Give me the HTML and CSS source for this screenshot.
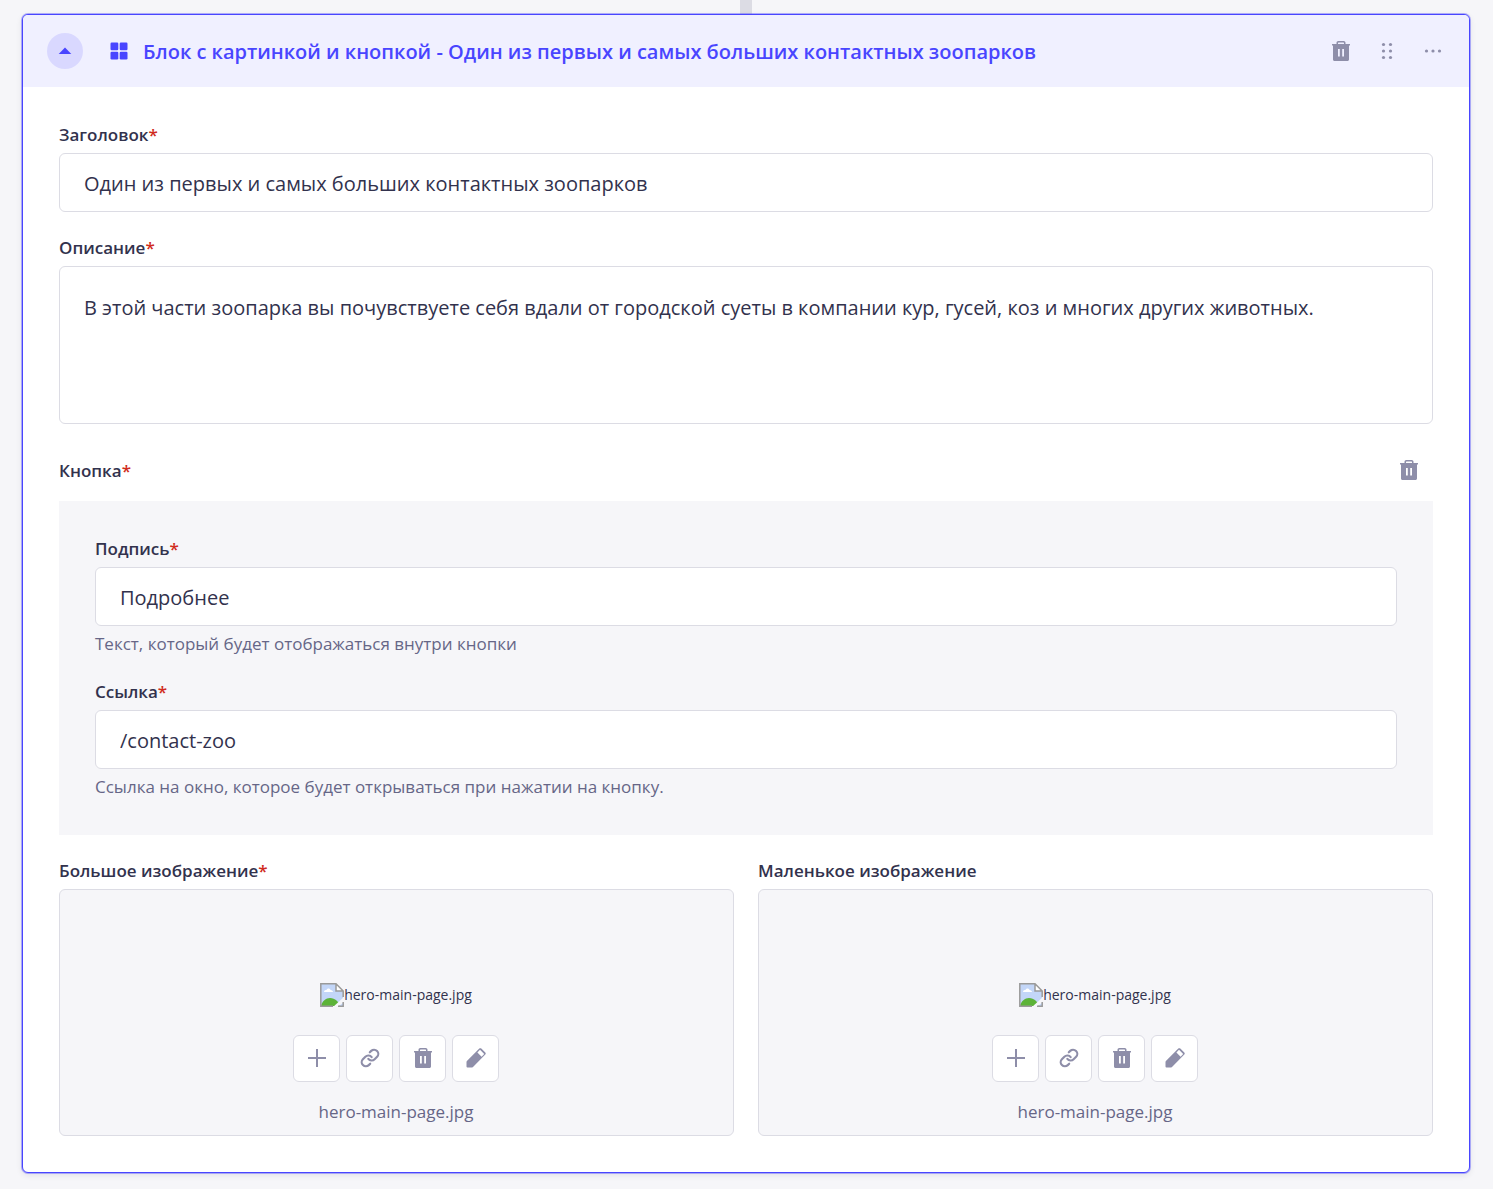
FILE: index.html
```html
<!DOCTYPE html>
<html lang="ru">
<head>
<meta charset="utf-8">
<meta name="viewport" content="width=device-width, initial-scale=1">
<title>Блок с картинкой и кнопкой</title>
<link rel="stylesheet" href="styles.css">
</head>
<body>
<svg class="sprite" aria-hidden="true">
  <symbol id="trash" viewBox="0 0 18 20">
    <path fill="currentColor" fill-rule="evenodd" d="M4.5 3V1.8C4.5.8 5.3 0 6.300 0h5.400c1 0 1.800.8 1.800 1.800V3H18v1.500h-1V18.500c0 .8-.7 1.500-1.500 1.500h-13C1.700 20 1 19.300 1 18.500V4.500H0V3zM6 3h6V1.900c0-.3-.2-.5-.5-.5h-5c-.3 0-.5.2-.5.500zM6 8v7.500h1.800V8zM10.200 8v7.500H12V8z"/>
  </symbol>
  <symbol id="plus" viewBox="0 0 20 20">
    <path fill="none" stroke="currentColor" stroke-width="2" d="M10 1v18M1 10h18"/>
  </symbol>
  <symbol id="link" viewBox="0 0 24 24">
    <path fill="none" stroke="currentColor" stroke-width="2.600" stroke-linecap="round" stroke-linejoin="round" d="M10 13a5 5 0 0 0 7.540.54l3-3a5 5 0 0 0-7.070-7.070l-1.720 1.710M14 11a5 5 0 0 0-7.540-.54l-3 3a5 5 0 0 0 7.070 7.070l1.710-1.710"/>
  </symbol>
  <symbol id="pencil" viewBox="0 0 20 20">
    <path fill="currentColor" fill-rule="evenodd" d="M13.300.6c.6-.6 1.400-.6 2 0l4 4c.6.6.6 1.400 0 2L7 19l-.8.400H1.400c-.5 0-.9-.4-.9-.9v-4.700l.4-.8zM11.400 4.500l4.200 4.200L18.200 6 14 1.800z"/>
  </symbol>
  <symbol id="broken" viewBox="0 0 24 24">
    <path fill="#c3d6f8" d="M1 1h15l7 7v15H1z"/>
    <path fill="#fff" d="M4 9c0-2 2-2 2.500-2C7 5 10 5 10.500 7c1.500 0 2.500 1 2.500 2zM16 1l7 7h-7z"/>
    <path fill="#5cb338" d="M1 23c1-5 5-8 9-8 5 0 9 4 10 8z"/>
    <path fill="#f6f6f9" d="M13 24 24 14v5l-6 5z"/>
    <path fill="none" stroke="#9a9a9a" stroke-width="1.500" d="M13 23.200H.8V.8H16l7.200 7.200v6M16 .8V8h7.200M23.200 19v4.200H18"/>
  </symbol>
</svg>

<div class="connector"></div>
<main class="block">
  <header class="block-header">
    <button class="toggle" type="button" aria-label="Свернуть">
      <svg width="14" height="8" viewBox="0 0 14 8"><path fill="currentColor" d="M7 .5 13.300 7H.7z"/></svg>
    </button>
    <svg class="block-icon" width="18" height="18" viewBox="0 0 18 18" fill="currentColor"><rect x=".5" y=".5" width="7.800" height="7.800" rx="1.200"/><rect x="9.700" y=".5" width="7.800" height="7.800" rx="1.200"/><rect x=".5" y="9.700" width="7.800" height="7.800" rx="1.200"/><rect x="9.700" y="9.700" width="7.800" height="7.800" rx="1.200"/></svg>
    <h2 class="block-title">Блок с картинкой и кнопкой - Один из первых и самых больших контактных зоопарков</h2>
    <div class="block-actions">
      <button class="icon-button" type="button" aria-label="Удалить"><svg width="18" height="20"><use href="#trash"/></svg></button>
      <button class="icon-button" type="button" aria-label="Переместить"><svg width="12" height="18" viewBox="0 0 12 18" fill="currentColor"><circle cx="2.500" cy="2.500" r="1.600"/><circle cx="9.500" cy="2.500" r="1.600"/><circle cx="2.500" cy="9" r="1.600"/><circle cx="9.500" cy="9" r="1.600"/><circle cx="2.500" cy="15.500" r="1.600"/><circle cx="9.500" cy="15.500" r="1.600"/></svg></button>
      <button class="icon-button" type="button" aria-label="Ещё"><svg width="18" height="4" viewBox="0 0 18 4" fill="currentColor"><circle cx="2.500" cy="2" r="1.600"/><circle cx="9" cy="2" r="1.600"/><circle cx="15.500" cy="2" r="1.600"/></svg></button>
    </div>
  </header>

  <form class="block-body">
    <div class="field">
      <label class="label" for="title">Заголовок<span class="required">*</span></label>
      <input class="control" id="title" type="text" value="Один из первых и самых больших контактных зоопарков">
    </div>
    <div class="field">
      <label class="label" for="description">Описание<span class="required">*</span></label>
      <textarea class="control control-area" id="description">В этой части зоопарка вы почувствуете себя вдали от городской суеты в компании кур, гусей, коз и многих других животных.</textarea>
    </div>
    <section class="group">
      <div class="group-header">
        <h3 class="label">Кнопка<span class="required">*</span></h3>
        <button class="icon-button" type="button" aria-label="Удалить кнопку"><svg width="18" height="20"><use href="#trash"/></svg></button>
      </div>
      <div class="group-body">
        <div class="field">
          <label class="label" for="caption">Подпись<span class="required">*</span></label>
          <input class="control" id="caption" type="text" value="Подробнее">
          <p class="hint">Текст, который будет отображаться внутри кнопки</p>
        </div>
        <div class="field">
          <label class="label" for="url">Ссылка<span class="required">*</span></label>
          <input class="control" id="url" type="text" value="/contact-zoo">
          <p class="hint">Ссылка на окно, которое будет открываться при нажатии на кнопку.</p>
        </div>
      </div>
    </section>
    <div class="media-row">
      <section class="field">
        <h3 class="label">Большое изображение<span class="required">*</span></h3>
        <div class="media">
          <div class="preview"><svg width="24" height="24"><use href="#broken"/></svg><span>hero-main-page.jpg</span></div>
          <div class="media-actions">
            <button class="tool" type="button" aria-label="Добавить"><svg width="20" height="20"><use href="#plus"/></svg></button>
            <button class="tool" type="button" aria-label="Копировать ссылку"><svg width="20" height="20"><use href="#link"/></svg></button>
            <button class="tool" type="button" aria-label="Удалить"><svg width="18" height="20"><use href="#trash"/></svg></button>
            <button class="tool" type="button" aria-label="Изменить"><svg width="20" height="20"><use href="#pencil"/></svg></button>
          </div>
          <p class="file-name">hero-main-page.jpg</p>
        </div>
      </section>
      <section class="field">
        <h3 class="label">Маленькое изображение</h3>
        <div class="media">
          <div class="preview"><svg width="24" height="24"><use href="#broken"/></svg><span>hero-main-page.jpg</span></div>
          <div class="media-actions">
            <button class="tool" type="button" aria-label="Добавить"><svg width="20" height="20"><use href="#plus"/></svg></button>
            <button class="tool" type="button" aria-label="Копировать ссылку"><svg width="20" height="20"><use href="#link"/></svg></button>
            <button class="tool" type="button" aria-label="Удалить"><svg width="18" height="20"><use href="#trash"/></svg></button>
            <button class="tool" type="button" aria-label="Изменить"><svg width="20" height="20"><use href="#pencil"/></svg></button>
          </div>
          <p class="file-name">hero-main-page.jpg</p>
        </div>
      </section>
    </div>
  </form>
</main>
</body>
</html>
```
FILE: styles.css
```css
* { box-sizing: border-box; }
body {
  margin: 0;
  padding: 0 23px 16px 22px;
  background: #f6f6f9;
  color: #32324d;
  font: 20px/24px "Open Sans", "Noto Sans", sans-serif;
}
h2, h3, p { margin: 0; }
button { padding: 0; border: 0; background: none; color: #8e8ea9; display: flex; align-items: center; justify-content: center; cursor: pointer; }
svg { display: block; flex: none; }
.sprite { position: absolute; width: 0; height: 0; }

.connector { width: 12px; height: 14px; margin: 0 auto; background: #dcdce4; }
.block {
  border: 1px solid #4945ff;
  border-radius: 6px;
  background: #fff;
  box-shadow: 0 0 0 1px rgba(73, 69, 255, 0.4), 0 2px 6px rgba(33, 33, 52, 0.1);
}
.block-header {
  display: flex;
  align-items: center;
  padding: 18px 13px 18px 24px;
  border-radius: 5px 5px 0 0;
  background: #f0f0ff;
  color: #4945ff;
}
.toggle { width: 36px; height: 36px; border-radius: 50%; background: #d9d8ff; color: #4945ff; }
.block-icon { margin-left: 27px; }
.block-title { flex: 1; margin-left: 15px; padding-top: 2px; font-size: 20px; line-height: 24px; font-weight: 600; }
.block-actions { display: flex; }
.icon-button { width: 48px; height: 36px; padding-bottom: 2px; }
.block-actions .icon-button { width: 46px; padding-bottom: 0; }

.block-body { display: grid; gap: 24px; padding: 36px; }
.field { display: flex; flex-direction: column; gap: 6px; min-width: 0; }
.label { font-size: 17px; line-height: 24px; font-weight: 600; }
.required { color: #d02b20; }
.control {
  display: block;
  width: 100%;
  height: 59px;
  padding: 2px 24px 0;
  border: 1px solid #dcdce4;
  border-radius: 6px;
  background: #fff;
  color: #32324d;
  font: inherit;
}
.control-area { height: 158px; padding: 26px 24px; line-height: 30px; resize: none; }
.hint { font-size: 17px; line-height: 24px; color: #666687; }
.group { display: grid; gap: 8px; }
.group-header { display: flex; align-items: center; justify-content: space-between; height: 45px; }
.group-body { display: grid; gap: 24px; padding: 36px; background: #f6f6f9; }

.media-row { display: grid; grid-template-columns: 1fr 1fr; gap: 24px; }
.media {
  display: flex;
  flex-direction: column;
  align-items: center;
  padding: 93px 13px 11px 12px;
  border: 1px solid #dcdce4;
  border-radius: 6px;
  background: #f6f6f9;
}
.preview { display: flex; align-items: center; font-size: 14px; line-height: 24px; }
.media-actions { display: flex; gap: 6px; margin: 28px 0 18px; }
.tool { width: 47px; height: 47px; padding-bottom: 2px; border: 1px solid #dcdce4; border-radius: 6px; background: #fff; }
.file-name { font-size: 17px; color: #666687; }
```
